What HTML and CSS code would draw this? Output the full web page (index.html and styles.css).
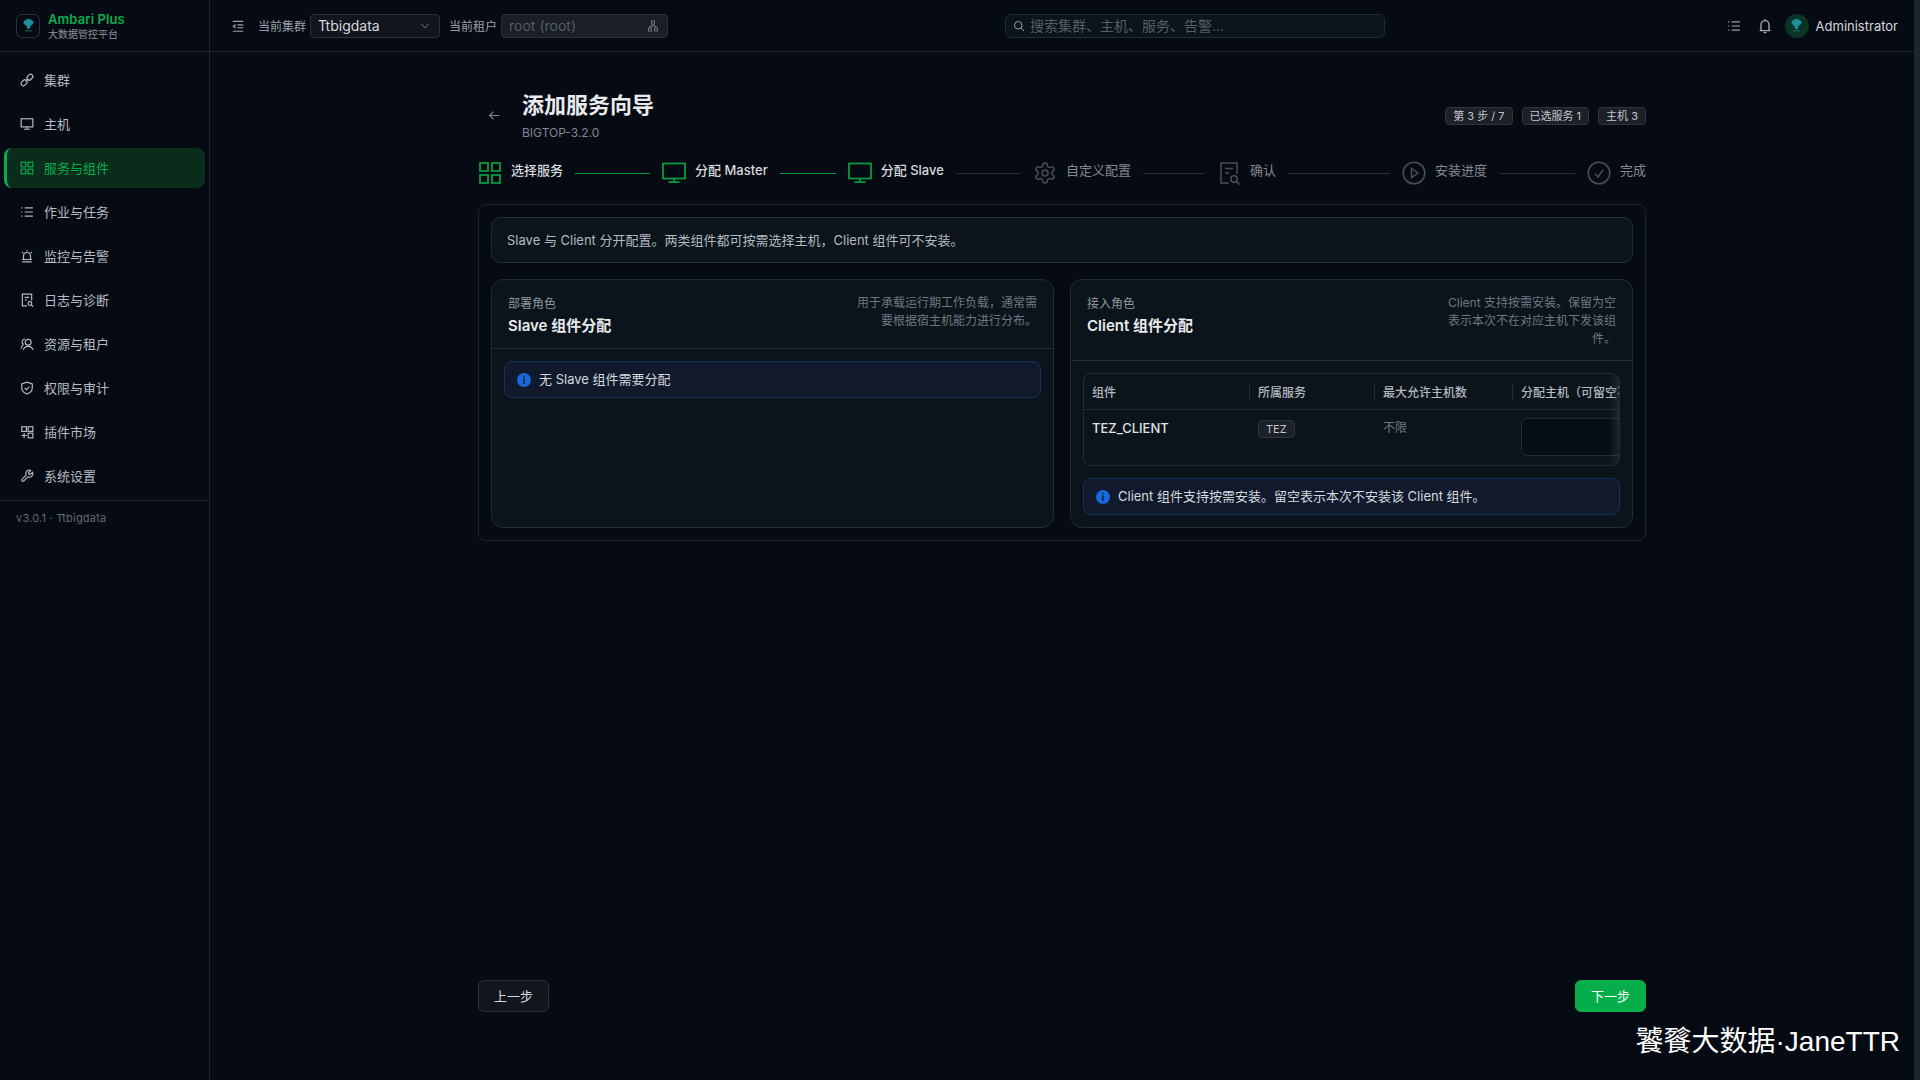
FILE: index.html
```html
<!DOCTYPE html>
<html lang="zh-CN">
<head>
<meta charset="UTF-8" />
<title>添加服务向导 - Ambari Plus</title>
<link rel="stylesheet" href="styles.css">
</head>
<body>

<!-- icon sprite -->
<svg class="sprite" xmlns="http://www.w3.org/2000/svg">
  <symbol id="i-link" viewBox="0 0 24 24"><rect x="1.5" y="13" width="11" height="7.5" rx="3.7" transform="rotate(-45 7 16.7)"/><rect x="11.5" y="3.5" width="11" height="7.5" rx="3.7" transform="rotate(-45 17 7.2)"/><path d="M9.5 14.5l5-5"/></symbol>
  <symbol id="i-desktop" viewBox="0 0 24 24"><rect x="2" y="3" width="20" height="14"/><path d="M12 17v4M7 21h10"/></symbol>
  <symbol id="i-monitor" viewBox="0 0 24 24"><rect x="1" y="2.500" width="22" height="15"/><path d="M12 17.500v3.500M6.500 21.200h11"/></symbol>
  <symbol id="i-grid" viewBox="0 0 24 24"><rect x="2" y="2" width="8" height="8"/><rect x="14" y="2" width="8" height="8"/><rect x="2" y="14" width="8" height="8"/><rect x="14" y="14" width="8" height="8"/></symbol>
  <symbol id="i-list" viewBox="0 0 24 24"><path d="M8 5h14M8 12h14M8 19h14M2 5h2M2 12h2M2 19h2"/></symbol>
  <symbol id="i-alert" viewBox="0 0 24 24"><path d="M6 18v-6a6 6 0 0 1 12 0v6M3.500 18h17M4 22h16M12 1.500v2.500M3.500 5l2 2M20.500 5l-2 2"/></symbol>
  <symbol id="i-file" viewBox="0 0 24 24"><path d="M12 22H4V2h16v11M8 7.500h8M8 12h4"/><circle cx="17" cy="18" r="3.200"/><path d="M19.500 20.500L22.500 23.500"/></symbol>
  <symbol id="i-team" viewBox="0 0 24 24"><circle cx="14" cy="9" r="5"/><path d="M5.500 22a9 9 0 0 1 17 0M8.500 3.500a5 5 0 0 0-2 9.500M1.500 20a8 8 0 0 1 4-6"/></symbol>
  <symbol id="i-shield" viewBox="0 0 24 24"><path d="M12 2l9 3v7c0 5-4 8.500-9 10-5-1.500-9-5-9-10V5z"/><path d="M8 12l3 3 5-5.500"/></symbol>
  <symbol id="i-plugin" viewBox="0 0 24 24"><rect x="3" y="3" width="8" height="8"/><rect x="14" y="3" width="8" height="8"/><rect x="14" y="14" width="8" height="8"/><path d="M7 13.500v9M2.500 18h9"/></symbol>
  <symbol id="i-tool" viewBox="0 0 24 24"><path d="M14.700 6.300a1 1 0 0 0 0 1.400l1.600 1.600a1 1 0 0 0 1.400 0l3.770-3.770a6 6 0 0 1-7.940 7.940l-6.910 6.910a2.120 2.120 0 0 1-3-3l6.910-6.910a6 6 0 0 1 7.940-7.940l-3.760 3.760z"/></symbol>
  <symbol id="i-fold" viewBox="0 0 24 24"><path d="M3 4h18M11 10h10M11 15h10M3 21h18M8 9.500l-4 3 4 3"/></symbol>
  <symbol id="i-chevron" viewBox="0 0 24 24"><path d="M5 8l7 8 7-8"/></symbol>
  <symbol id="i-org" viewBox="0 0 24 24"><rect x="9" y="2" width="6" height="6"/><rect x="3" y="16" width="6" height="6"/><rect x="15" y="16" width="6" height="6"/><path d="M12 8v4M6 16v-4h12v4"/></symbol>
  <symbol id="i-search" viewBox="0 0 24 24"><circle cx="10.500" cy="10.500" r="7.500"/><path d="M16 16l6 6"/></symbol>
  <symbol id="i-bell" viewBox="0 0 24 24"><path d="M6 19V10a6 6 0 0 1 12 0v9M4 19h16M10 22h4M12 2v2"/></symbol>
  <symbol id="i-back" viewBox="0 0 24 24"><path d="M21 12H3M10 5l-7 7 7 7"/></symbol>
  <symbol id="i-gear" viewBox="0 0 24 24"><path d="M12.220 2h-.44a2 2 0 0 0-2 2v.18a2 2 0 0 1-1 1.730l-.43.25a2 2 0 0 1-2 0l-.15-.08a2 2 0 0 0-2.730.73l-.22.38a2 2 0 0 0 .73 2.730l.15.1a2 2 0 0 1 1 1.720v.51a2 2 0 0 1-1 1.740l-.15.09a2 2 0 0 0-.73 2.730l.22.38a2 2 0 0 0 2.730.73l.15-.08a2 2 0 0 1 2 0l.43.25a2 2 0 0 1 1 1.730V20a2 2 0 0 0 2 2h.44a2 2 0 0 0 2-2v-.18a2 2 0 0 1 1-1.730l.43-.25a2 2 0 0 1 2 0l.15.08a2 2 0 0 0 2.730-.73l.22-.39a2 2 0 0 0-.73-2.730l-.15-.08a2 2 0 0 1-1-1.740v-.5a2 2 0 0 1 1-1.740l.15-.09a2 2 0 0 0 .73-2.730l-.22-.38a2 2 0 0 0-2.730-.73l-.15.08a2 2 0 0 1-2 0l-.43-.25a2 2 0 0 1-1-1.730V4a2 2 0 0 0-2-2z"/><circle cx="12" cy="12" r="3"/></symbol>
  <symbol id="i-play" viewBox="0 0 24 24"><circle cx="12" cy="12" r="10.800"/><path d="M9.500 7.500l6.500 4.500-6.500 4.500z"/></symbol>
  <symbol id="i-check" viewBox="0 0 24 24"><circle cx="12" cy="12" r="10.800"/><path d="M8 12.500l3 3.500 5-7"/></symbol>
  <symbol id="i-tree" viewBox="0 0 24 24"><path d="M12 3c2 0 3 1 4 1.500 2 .5 3 2 2.500 4-.3 1.500-1.500 2.500-3 3-.8.3-1.500 1-1.500 2v2.500h-4V13.500c0-1-.7-1.700-1.500-2-1.500-.5-2.700-1.500-3-3C5 6.500 6 5 8 4.500 9 4 10 3 12 3z"/><path class="tree-base" d="M7 19.500h10"/></symbol>
</svg>

<div class="app">

  <aside class="sidebar">
    <div class="brand">
      <div class="brand-logo"><svg class="tree"><use href="#i-tree"/></svg></div>
      <div>
        <div class="brand-name">Ambari Plus</div>
        <div class="brand-sub">大数据管控平台</div>
      </div>
    </div>
    <nav class="nav">
      <a class="nav-item"><svg class="icon"><use href="#i-link"/></svg>集群</a>
      <a class="nav-item"><svg class="icon"><use href="#i-desktop"/></svg>主机</a>
      <a class="nav-item active"><svg class="icon"><use href="#i-grid"/></svg>服务与组件</a>
      <a class="nav-item"><svg class="icon"><use href="#i-list"/></svg>作业与任务</a>
      <a class="nav-item"><svg class="icon"><use href="#i-alert"/></svg>监控与告警</a>
      <a class="nav-item"><svg class="icon"><use href="#i-file"/></svg>日志与诊断</a>
      <a class="nav-item"><svg class="icon"><use href="#i-team"/></svg>资源与租户</a>
      <a class="nav-item"><svg class="icon"><use href="#i-shield"/></svg>权限与审计</a>
      <a class="nav-item"><svg class="icon"><use href="#i-plugin"/></svg>插件市场</a>
      <a class="nav-item"><svg class="icon"><use href="#i-tool"/></svg>系统设置</a>
    </nav>
    <div class="version">v3.0.1 · Ttbigdata</div>
  </aside>

  <div class="main-col">
    <header class="topbar">
      <svg class="icon fold"><use href="#i-fold"/></svg>
      <span class="top-label">当前集群</span>
      <div class="select">Ttbigdata<svg class="icon-sm"><use href="#i-chevron"/></svg></div>
      <span class="top-label second">当前租户</span>
      <div class="select disabled">root (root)<svg class="icon-sm"><use href="#i-org"/></svg></div>
      <div class="search"><svg class="icon-sm"><use href="#i-search"/></svg>搜索集群、主机、服务、告警...</div>
      <div class="top-right">
        <svg class="icon"><use href="#i-list"/></svg>
        <svg class="icon bell"><use href="#i-bell"/></svg>
        <div class="avatar"><svg class="tree"><use href="#i-tree"/></svg></div>
        <span class="user-name">Administrator</span>
      </div>
    </header>

    <main class="content">
      <div class="page-head">
        <svg class="icon back"><use href="#i-back"/></svg>
        <div class="page-titles">
          <h1>添加服务向导</h1>
          <div class="page-sub">BIGTOP-3.2.0</div>
        </div>
        <div class="tags">
          <span class="tag">第 3 步 / 7</span>
          <span class="tag">已选服务 1</span>
          <span class="tag">主机 3</span>
        </div>
      </div>

      <div class="steps">
        <div class="step done"><svg class="step-icon small"><use href="#i-grid"/></svg><span>选择服务</span></div>
        <div class="step-line done w75"></div>
        <div class="step done"><svg class="step-icon"><use href="#i-monitor"/></svg><span>分配 Master</span></div>
        <div class="step-line done w56"></div>
        <div class="step done"><svg class="step-icon"><use href="#i-monitor"/></svg><span>分配 Slave</span></div>
        <div class="step-line w65"></div>
        <div class="step"><svg class="step-icon thin"><use href="#i-gear"/></svg><span>自定义配置</span></div>
        <div class="step-line w62"></div>
        <div class="step"><svg class="step-icon thin"><use href="#i-file"/></svg><span>确认</span></div>
        <div class="step-line w102"></div>
        <div class="step"><svg class="step-icon thin"><use href="#i-play"/></svg><span>安装进度</span></div>
        <div class="step-line w76"></div>
        <div class="step"><svg class="step-icon thin"><use href="#i-check"/></svg><span>完成</span></div>
      </div>

      <section class="panel">
        <div class="notice">Slave 与 Client 分开配置。两类组件都可按需选择主机，Client 组件可不安装。</div>
        <div class="cards">

          <div class="card">
            <div class="card-head">
              <div>
                <div class="card-kicker">部署角色</div>
                <div class="card-title">Slave 组件分配</div>
              </div>
              <div class="card-desc">用于承载运行期工作负载，通常需要根据宿主机能力进行分布。</div>
            </div>
            <div class="card-body">
              <div class="info"><svg class="info-icon" viewBox="0 0 14 14"><circle cx="7" cy="7" r="7"/><rect class="dot" x="6.300" y="2.800" width="1.400" height="1.500"/><rect class="dot" x="6.300" y="5.400" width="1.400" height="5.600"/></svg>无 Slave 组件需要分配</div>
            </div>
          </div>

          <div class="card">
            <div class="card-head">
              <div>
                <div class="card-kicker">接入角色</div>
                <div class="card-title">Client 组件分配</div>
              </div>
              <div class="card-desc narrow">Client 支持按需安装。保留为空表示本次不在对应主机下发该组件。</div>
            </div>
            <div class="card-body">
              <div class="table-wrap">
                <table>
                  <thead>
                    <tr><th class="col-a">组件</th><th class="col-b">所属服务</th><th class="col-c">最大允许主机数</th><th class="col-d">分配主机（可留空不安装）</th></tr>
                  </thead>
                  <tbody>
                    <tr>
                      <td class="comp">TEZ_CLIENT</td>
                      <td><span class="tag">TEZ</span></td>
                      <td class="muted">不限</td>
                      <td><div class="host-input"></div></td>
                    </tr>
                  </tbody>
                </table>
              </div>
              <div class="info"><svg class="info-icon" viewBox="0 0 14 14"><circle cx="7" cy="7" r="7"/><rect class="dot" x="6.300" y="2.800" width="1.400" height="1.500"/><rect class="dot" x="6.300" y="5.400" width="1.400" height="5.600"/></svg>Client 组件支持按需安装。留空表示本次不安装该 Client 组件。</div>
            </div>
          </div>

        </div>
      </section>

      <div class="footer-btns">
        <button class="btn">上一步</button>
        <button class="btn primary">下一步</button>
      </div>
    </main>
  </div>

  <div class="scroll-track"></div>
</div>

<div class="watermark">饕餮大数据·JaneTTR</div>

</body>
</html>
```

FILE: styles.css
```css
* { box-sizing: border-box; }

body {
  margin: 0;
  height: 100vh;
  overflow: hidden;
  background: #060b13;
  color: #d5d8dd;
  font-family: Inter, "Noto Sans CJK SC", sans-serif;
  font-size: 13px;
}

.sprite { display: none; }

svg {
  fill: none;
  stroke: currentColor;
  stroke-width: 2;
  flex: none;
}

.app {
  display: flex;
  height: 100vh;
}

/* sidebar */
.sidebar {
  flex: 0 0 210px;
  border-right: 1px solid #1d232b;
}
.brand {
  height: 52px;
  display: flex;
  align-items: center;
  gap: 8px;
  padding: 0 16px;
  border-bottom: 1px solid #1d232b;
}
.brand-logo {
  width: 24px;
  height: 24px;
  border: 1px solid #2a323c;
  border-radius: 6px;
  display: flex;
  align-items: center;
  justify-content: center;
}
.tree {
  width: 17px;
  height: 17px;
  color: #1f8e9c;
  fill: #1f8e9c;
  stroke-width: 1;
}
.brand-name {
  color: #0aad4c;
  font-weight: 600;
  font-size: 13px;
  line-height: 16px;
  letter-spacing: 0.1px;
}
.brand-sub {
  color: #8d949d;
  font-size: 10px;
  line-height: 13px;
  margin-top: 1px;
}
.nav {
  display: flex;
  flex-direction: column;
  gap: 4px;
  padding: 8px 4px 4px;
  border-bottom: 1px solid #1d232b;
}
.nav-item {
  height: 40px;
  display: flex;
  align-items: center;
  gap: 10px;
  padding-left: 16px;
  padding-bottom: 2px;
  color: #b6bbc3;
  border-radius: 8px;
  width: 201px;
}
.nav-item .icon { margin-top: 2px; }
.nav-item.active {
  background: #0a2c1b;
  color: #0aad4c;
  border-left: 3px solid #0aad4c;
  padding-left: 13px;
}
.icon {
  width: 14px;
  height: 14px;
}
.icon-sm {
  width: 12px;
  height: 12px;
}
.version {
  padding: 10px 16px;
  font-size: 11px;
  line-height: 15px;
  letter-spacing: 0.2px;
  color: #5f6975;
}

/* top bar */
.main-col {
  flex: 1;
  min-width: 0;
  display: flex;
  flex-direction: column;
}
.topbar {
  flex: 0 0 52px;
  display: flex;
  align-items: center;
  padding: 0 16px 0 21px;
  border-bottom: 1px solid #1d232b;
}
.fold {
  margin-right: 13px;
  color: #9aa0a8;
}
.top-label {
  font-size: 12px;
  color: #9aa0a8;
  margin-right: 4px;
}
.top-label.second { margin-left: 9px; }
.select {
  width: 130px;
  height: 24px;
  padding: 0 8px 0 7px;
  display: flex;
  align-items: center;
  justify-content: space-between;
  font-size: 14px;
  color: #d5d8dd;
  background: #11161d;
  border: 1px solid #2c3139;
  border-radius: 4px;
}
.select .icon-sm { color: #6f7680; }
.select.disabled {
  width: 167px;
  color: #555b64;
  background: #1a1e25;
}
.search {
  width: 380px;
  height: 24px;
  margin-left: 337px;
  padding: 0 7px 1px;
  display: flex;
  align-items: center;
  gap: 5px;
  font-size: 14px;
  color: #555d67;
  background: #0b141a;
  border: 1px solid #1f2d38;
  border-radius: 6px;
}
.search .icon-sm {
  margin-top: 1px;
  color: #9aa0a8;
}
.top-right {
  margin-left: auto;
  display: flex;
  align-items: center;
  color: #9aa0a8;
}
.bell {
  width: 16px;
  height: 16px;
  margin-left: 16px;
  color: #a9aeb5;
}
.avatar {
  width: 24px;
  height: 24px;
  margin-left: 12px;
  border-radius: 50%;
  background: #0b3426;
  display: flex;
  align-items: center;
  justify-content: center;
}
.user-name {
  margin-left: 7px;
  color: #d5d8dd;
}
.scroll-track {
  flex: 0 0 6px;
  background: #1d2630;
}

/* page */
.content {
  flex: 1;
  width: 1168px;
  margin: 0 auto;
  padding: 38px 0 68px;
  display: flex;
  flex-direction: column;
}
.page-head {
  display: flex;
  align-items: center;
  padding-left: 10px;
}
.back {
  color: #7f8893;
  width: 13px;
  height: 13px;
  margin-right: 21px;
  margin-bottom: 1px;
}
h1 {
  margin: 0;
  font-size: 22px;
  line-height: 30px;
  font-weight: 600;
  color: #e8eaed;
}
.page-sub {
  margin-top: 4px;
  font-size: 12px;
  line-height: 18px;
  color: #7f8893;
}
.tags {
  margin-left: auto;
  display: flex;
  gap: 9px;
}
.tag {
  display: inline-block;
  height: 18px;
  padding: 0 7px;
  font-size: 11px;
  line-height: 16px;
  color: #c3c7cd;
  background: #1c2027;
  border: 1px solid #30353d;
  border-radius: 4px;
}

/* steps */
.steps {
  display: flex;
  align-items: flex-start;
  margin-top: 19px;
  height: 24px;
  padding-left: 2px;
}
.step {
  flex: none;
  display: flex;
  align-items: flex-start;
  gap: 9px;
  color: #85888d;
  font-size: 13px;
  line-height: 18px;
  white-space: nowrap;
}
.step.done { color: #d5d8dd; font-weight: 500; }
.step-icon {
  width: 24px;
  height: 24px;
  color: #0a9a41;
  stroke-width: 1.800;
}
.step-icon.small {
  margin-left: -2px;
}
.step-icon.thin {
  color: #4b4e54;
  stroke-width: 1.500;
}
.step-line {
  flex: none;
  height: 1px;
  margin: 12px 12px 0;
  background: #2b2e34;
}
.step-line.done { background: #0a9a41; }
.w56 { width: 56px; }
.w62 { width: 62px; }
.w65 { width: 65px; }
.w75 { width: 75px; }
.w76 { width: 76px; }
.w102 { width: 102px; }

/* panel */
.panel {
  margin-top: 19px;
  padding: 12px;
  border: 1px solid #1a2530;
  border-radius: 8px;
}
.notice {
  height: 46px;
  padding: 0 15px 2px;
  display: flex;
  align-items: center;
  background: #0b141a;
  border: 1px solid #1e2d38;
  border-radius: 10px;
  color: #b4b9c0;
}
.cards {
  margin-top: 16px;
  display: grid;
  grid-template-columns: minmax(0, 1fr) minmax(0, 1fr);
  gap: 16px;
}
.card {
  background: #0b141a;
  border: 1px solid #1e2d38;
  border-radius: 12px;
  height: 249px;
}
.card-head {
  display: flex;
  justify-content: space-between;
  gap: 16px;
  padding: 15px 16px 11px;
  border-bottom: 1px solid #1e2d38;
}
.card-kicker {
  font-size: 12px;
  line-height: 18px;
  color: #8f959d;
}
.card-title {
  margin-top: 2px;
  font-size: 15px;
  line-height: 22px;
  font-weight: 600;
  color: #e8eaed;
}
.card-desc {
  width: 181px;
  margin-top: -1px;
  font-size: 12px;
  line-height: 18px;
  text-align: right;
  color: #6e7883;
}
.card-desc.narrow {
  width: 172px;
  margin-bottom: 1px;
}
.card-body {
  padding: 12px;
  display: flex;
  flex-direction: column;
  gap: 12px;
}
.info {
  height: 37px;
  padding: 0 12px 2px;
  display: flex;
  align-items: center;
  gap: 8px;
  color: #d5d8dd;
  background: #111a2c;
  border: 1px solid #15325b;
  border-radius: 8px;
}
.info-icon {
  width: 14px;
  height: 14px;
  margin-top: 2px;
  fill: #1668dc;
  stroke: none;
}
.info-icon .dot { fill: #111a2c; }

/* table */
.table-wrap {
  position: relative;
  height: 93px;
  overflow: hidden;
  border: 1px solid #1e2d38;
  border-radius: 8px;
}
.table-wrap::after {
  content: "";
  position: absolute;
  top: 0;
  right: 0;
  bottom: 0;
  width: 10px;
  background: linear-gradient(to right, rgba(60, 66, 74, 0), rgba(60, 66, 74, 0.4));
}
table {
  table-layout: fixed;
  width: 640px;
  border-collapse: collapse;
}
th {
  position: relative;
  height: 35px;
  padding: 0 8px;
  text-align: left;
  font-size: 12px;
  font-weight: 500;
  color: #b4b9c0;
  white-space: nowrap;
  overflow: hidden;
  border-bottom: 1px solid #1e2d38;
}
th + th::before {
  content: "";
  position: absolute;
  left: 0;
  top: 9px;
  height: 18px;
  width: 1px;
  background: #1e2d38;
}
.col-a { width: 165px; }
.col-b { width: 125px; }
.col-c { width: 138px; }
th + th,
td + td { padding-left: 9px; }
td {
  padding: 8px;
  vertical-align: top;
  line-height: 20px;
}
.comp {
  font-weight: 500;
  color: #e0e3e6;
}
.muted { color: #6e7883; font-size: 12px; }
.host-input {
  width: 200px;
  height: 38px;
  background: #080e15;
  border: 1px solid #1e2d38;
  border-radius: 6px;
}

/* footer */
.footer-btns {
  margin-top: auto;
  display: flex;
  justify-content: space-between;
}
.btn {
  width: 71px;
  height: 32px;
  padding: 0 0 2px;
  font-family: inherit;
  font-size: 13px;
  color: #d5d8dd;
  background: #11161d;
  border: 1px solid #2c3139;
  border-radius: 6px;
}
.btn.primary {
  color: #fff;
  background: #05ae4b;
  border-color: #05ae4b;
}

/* burned-in watermark sits over the page */
.watermark {
  position: absolute;
  right: 20px;
  top: 1024px;
  font-family: "Liberation Sans", "Noto Sans CJK SC", sans-serif;
  font-size: 28px;
  line-height: 36px;
  color: #fff;
}
```
